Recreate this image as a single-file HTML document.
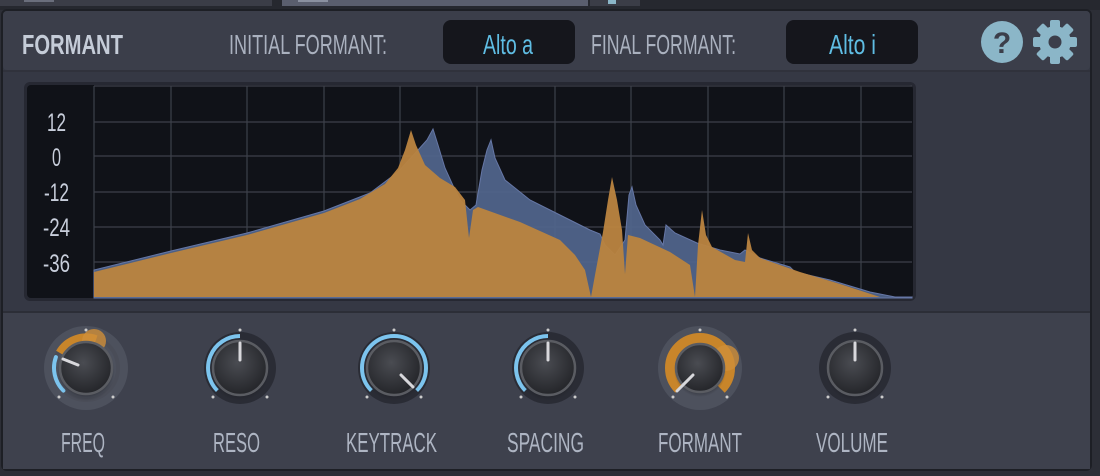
<!DOCTYPE html>
<html><head><meta charset="utf-8"><style>
html,body{margin:0;padding:0;width:1100px;height:476px;overflow:hidden;background:#2c2e36;}
svg{display:block}
text{font-family:"Liberation Sans",sans-serif;}
</style></head><body>
<svg width="1100" height="476" viewBox="0 0 1100 476" xmlns="http://www.w3.org/2000/svg">
<defs>
<radialGradient id="kb" cx="0.45" cy="0.4" r="0.7">
<stop offset="0" stop-color="#4a4c52"/><stop offset="1" stop-color="#1e1f23"/>
</radialGradient>
<radialGradient id="sh" cx="0.5" cy="0.5" r="0.5">
<stop offset="0.6" stop-color="#1a1b20" stop-opacity="0.8"/><stop offset="1" stop-color="#1a1b20" stop-opacity="0"/>
</radialGradient>
</defs>
<rect x="0" y="0" width="1100" height="10" fill="#26282f"/>
<rect x="0" y="0" width="272" height="6" fill="#3b3d47"/>
<rect x="24" y="0" width="30" height="2" fill="#6a6e7c"/>
<rect x="282" y="0" width="306" height="6" fill="#5a5e6e"/>
<rect x="298" y="0" width="30" height="2" fill="#8a90a0"/>
<rect x="590" y="0" width="50" height="6" fill="#3b3d47"/>
<rect x="608" y="0" width="8" height="4" fill="#8bb6c8"/>
<rect x="2" y="10" width="1089" height="460" rx="5" fill="#353844" stroke="#1d1f25" stroke-width="2"/>
<rect x="3" y="11" width="1087" height="59" rx="4" fill="#3b3e4a"/>
<rect x="3" y="70" width="1087" height="2" fill="#30323c"/>
<rect x="3" y="312" width="1087" height="157" fill="#3e414d"/>
<rect x="3" y="311" width="1087" height="2" fill="#2c2e37"/>
<text x="22" y="54" font-size="28" font-weight="bold" fill="#c5ccd8" textLength="101" lengthAdjust="spacingAndGlyphs">FORMANT</text>
<text x="229" y="54" font-size="28" fill="#aab1bf" textLength="158" lengthAdjust="spacingAndGlyphs">INITIAL FORMANT:</text>
<rect x="443" y="20" width="132" height="44" rx="8" fill="#15161c"/>
<text x="483" y="54" font-size="28" fill="#5fbde3" textLength="50" lengthAdjust="spacingAndGlyphs">Alto a</text>
<text x="591" y="54" font-size="28" fill="#aab1bf" textLength="145" lengthAdjust="spacingAndGlyphs">FINAL FORMANT:</text>
<rect x="786" y="20" width="132" height="44" rx="8" fill="#15161c"/>
<text x="829" y="54" font-size="28" fill="#5fbde3" textLength="47" lengthAdjust="spacingAndGlyphs">Alto i</text>
<circle cx="1002" cy="42" r="21" fill="#8bb6c8"/>
<text x="1002" y="53" font-size="30" font-weight="bold" fill="#3b3e4a" text-anchor="middle">?</text>
<g transform="translate(1055,42)" fill="#8bb6c8">
<circle r="16"/>
<rect x="-5" y="-22" width="10" height="12" rx="2"/>
<rect x="-5" y="-22" width="10" height="12" rx="2" transform="rotate(45)"/>
<rect x="-5" y="-22" width="10" height="12" rx="2" transform="rotate(90)"/>
<rect x="-5" y="-22" width="10" height="12" rx="2" transform="rotate(135)"/>
<rect x="-5" y="-22" width="10" height="12" rx="2" transform="rotate(180)"/>
<rect x="-5" y="-22" width="10" height="12" rx="2" transform="rotate(225)"/>
<rect x="-5" y="-22" width="10" height="12" rx="2" transform="rotate(270)"/>
<rect x="-5" y="-22" width="10" height="12" rx="2" transform="rotate(315)"/>
<circle r="6.5" fill="#3b3e4a"/>
</g>
<rect x="24" y="82" width="892" height="219" rx="6" fill="#262832"/>
<rect x="27" y="85" width="886" height="213" rx="4" fill="#101218"/>
<g stroke="#3d404a" stroke-width="1.2">
<line x1="94" y1="86" x2="94" y2="297"/><line x1="171" y1="86" x2="171" y2="297"/><line x1="247" y1="86" x2="247" y2="297"/>
<line x1="324" y1="86" x2="324" y2="297"/><line x1="400" y1="86" x2="400" y2="297"/><line x1="477" y1="86" x2="477" y2="297"/>
<line x1="555" y1="86" x2="555" y2="297"/><line x1="631" y1="86" x2="631" y2="297"/><line x1="708" y1="86" x2="708" y2="297"/>
<line x1="784" y1="86" x2="784" y2="297"/><line x1="861" y1="86" x2="861" y2="297"/>
<line x1="94" y1="86" x2="912" y2="86"/>
<line x1="94" y1="122" x2="912" y2="122"/><line x1="94" y1="156" x2="912" y2="156"/><line x1="94" y1="192" x2="912" y2="192"/>
<line x1="94" y1="227" x2="912" y2="227"/><line x1="94" y1="262" x2="912" y2="262"/>
</g>
<g font-size="25" fill="#c8cedb">
<text x="47" y="131" textLength="19" lengthAdjust="spacingAndGlyphs">12</text>
<text x="52" y="166" textLength="9" lengthAdjust="spacingAndGlyphs">0</text>
<text x="44" y="201" textLength="25" lengthAdjust="spacingAndGlyphs">-12</text>
<text x="43" y="236" textLength="27" lengthAdjust="spacingAndGlyphs">-24</text>
<text x="43" y="272" textLength="27" lengthAdjust="spacingAndGlyphs">-36</text>
</g>
<path fill="#50648a" fill-opacity="0.95" stroke="#6677a6" stroke-width="1" d="M94,297 L94,270 L171,251 L247,233 L324,211 L370,193 L398,172 L418,150 L427,140 L433,129 L438,145 L445,168 L455,190 L460,200 L470,210 L476,205 L482,170 L487,150 L491,140 L495,158 L505,180 L530,200 L560,215 L590,230 L600,234 L605,245 L615,255 L625,240 L629,195 L632,187 L636,205 L645,225 L660,240 L663,245 L666,225 L675,233 L697,243 L720,250 L740,254 L745,250 L760,258 L790,267 L795,272 L830,280 L870,292 L895,297 L912,297 L912,298 L94,298 Z"/>
<path fill="#b98340" fill-opacity="0.96" d="M94,297 L94,272 L171,253 L247,235 L324,213 L360,199 L385,184 L398,168 L405,150 L411,130 L416,145 L425,165 L440,178 L455,187 L465,200 L469,238 L473,210 L478,207 L520,222 L560,240 L575,255 L585,270 L591,297 L595,275 L603,232 L608,200 L612,177 L617,200 L622,230 L625,274 L628,235 L640,238 L670,252 L690,265 L695,297 L698,245 L702,210 L706,235 L712,247 L735,260 L745,262 L748,233 L752,250 L760,258 L800,272 L840,284 L880,297 Z"/>
<g stroke-linecap="round">
<g transform="translate(86,368)">
<circle r="42" fill="#5a5e6c" fill-opacity="0.55"/>
<circle r="32" fill="none" stroke="#4a4d58" stroke-width="4"/>
<path d="M-22.6,22.6 A32,32 0 0 1 -30.1,-10.9" fill="none" stroke="#7cc4ee" stroke-width="4"/>
<path d="M-26,-15 A30,30 0 0 1 10,-28.3" fill="none" stroke="#c8852a" stroke-width="9" stroke-linecap="butt"/>
<circle cx="8" cy="-27" r="12" fill="#d08f3a" fill-opacity="0.8"/>
<circle r="29" cy="4" fill="url(#sh)"/>
<circle r="26" fill="url(#kb)" stroke="#5a5c62" stroke-width="2.5"/>
<line x1="-8" y1="-3" x2="-23" y2="-9" stroke="#d8d8dc" stroke-width="3"/>
<circle cx="-27" cy="29" r="1.5" fill="#ccc"/><circle cx="27" cy="29" r="1.5" fill="#ccc"/><circle cx="0" cy="-38" r="1.5" fill="#ccc"/>
</g>
<g transform="translate(240,368)">
<circle r="36" fill="#2a2c35"/>
<path d="M-22.6,22.6 A32,32 0 0 1 0,-32" fill="none" stroke="#7cc4ee" stroke-width="4" stroke-linecap="butt"/>
<circle r="29" cy="4" fill="url(#sh)"/>
<circle r="27" fill="url(#kb)" stroke="#5a5c62" stroke-width="2.5"/>
<line x1="0" y1="-8" x2="0" y2="-25" stroke="#d8d8dc" stroke-width="3"/>
<circle cx="-27" cy="29" r="1.5" fill="#ccc"/><circle cx="27" cy="29" r="1.5" fill="#ccc"/><circle cx="0" cy="-38" r="1.5" fill="#ccc"/>
</g>
<g transform="translate(394,368)">
<circle r="36" fill="#2a2c35"/>
<path d="M-22.6,22.6 A32,32 0 1 1 22.6,22.6" fill="none" stroke="#7cc4ee" stroke-width="4" stroke-linecap="butt"/>
<circle r="29" cy="4" fill="url(#sh)"/>
<circle r="27" fill="url(#kb)" stroke="#5a5c62" stroke-width="2.5"/>
<line x1="7" y1="7" x2="19" y2="19" stroke="#d8d8dc" stroke-width="3"/>
<circle cx="-27" cy="29" r="1.5" fill="#ccc"/><circle cx="27" cy="29" r="1.5" fill="#ccc"/><circle cx="0" cy="-38" r="1.5" fill="#ccc"/>
</g>
<g transform="translate(548,368)">
<circle r="36" fill="#2a2c35"/>
<path d="M-22.6,22.6 A32,32 0 0 1 0,-32" fill="none" stroke="#7cc4ee" stroke-width="4" stroke-linecap="butt"/>
<circle r="29" cy="4" fill="url(#sh)"/>
<circle r="27" fill="url(#kb)" stroke="#5a5c62" stroke-width="2.5"/>
<line x1="0" y1="-8" x2="0" y2="-25" stroke="#d8d8dc" stroke-width="3"/>
<circle cx="-27" cy="29" r="1.5" fill="#ccc"/><circle cx="27" cy="29" r="1.5" fill="#ccc"/><circle cx="0" cy="-38" r="1.5" fill="#ccc"/>
</g>
<g transform="translate(700,368)">
<circle r="42" fill="#5a5e6c" fill-opacity="0.55"/>
<path d="M-21.2,21.2 A30,30 0 1 1 21.2,21.2" fill="none" stroke="#c8852a" stroke-width="10" stroke-linecap="butt"/>
<circle cx="26" cy="-10" r="13" fill="#d08f3a" fill-opacity="0.8"/>
<circle r="26" cy="3" fill="url(#sh)"/>
<circle r="24" fill="url(#kb)" stroke="#5a5c62" stroke-width="2.5"/>
<line x1="-7" y1="7" x2="-23" y2="23" stroke="#d8d8dc" stroke-width="3"/>
<circle cx="-27" cy="29" r="1.5" fill="#ccc"/><circle cx="27" cy="29" r="1.5" fill="#ccc"/><circle cx="0" cy="-38" r="1.5" fill="#ccc"/>
</g>
<g transform="translate(855,368)">
<circle r="36" fill="#2a2c35"/>
<circle r="29" cy="4" fill="url(#sh)"/>
<circle r="27" fill="url(#kb)" stroke="#5a5c62" stroke-width="2.5"/>
<line x1="0" y1="-8" x2="0" y2="-25" stroke="#d8d8dc" stroke-width="3"/>
<circle cx="-27" cy="29" r="1.5" fill="#ccc"/><circle cx="27" cy="29" r="1.5" fill="#ccc"/><circle cx="0" cy="-38" r="1.5" fill="#ccc"/>
</g>
</g>
<g font-size="28" fill="#aeb5c3">
<text x="61" y="452" textLength="44" lengthAdjust="spacingAndGlyphs">FREQ</text>
<text x="213" y="452" textLength="47" lengthAdjust="spacingAndGlyphs">RESO</text>
<text x="346" y="452" textLength="91" lengthAdjust="spacingAndGlyphs">KEYTRACK</text>
<text x="507" y="452" textLength="77" lengthAdjust="spacingAndGlyphs">SPACING</text>
<text x="658" y="452" textLength="84" lengthAdjust="spacingAndGlyphs">FORMANT</text>
<text x="816" y="452" textLength="72" lengthAdjust="spacingAndGlyphs">VOLUME</text>
</g>
</svg>
</body></html>
